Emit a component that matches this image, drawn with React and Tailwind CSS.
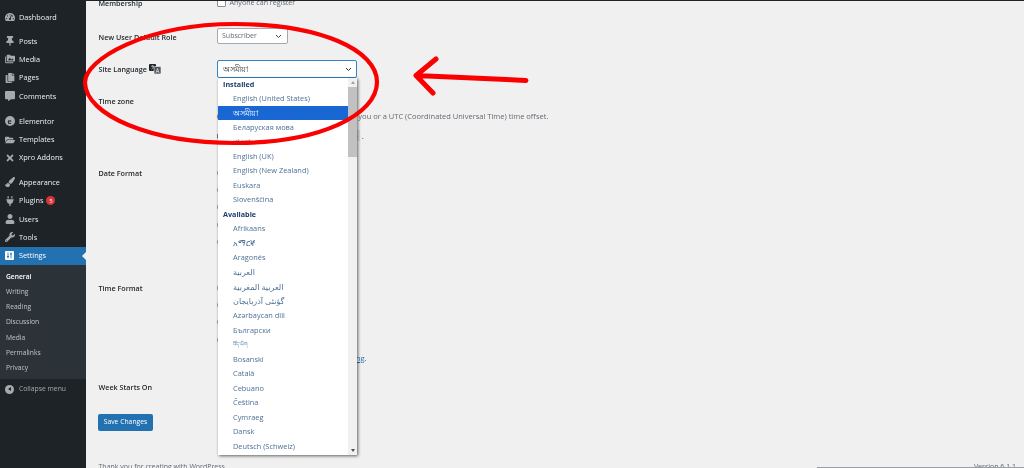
import React from "react";
import { FaThumbtack, FaFolderOpen, FaUser, FaWrench, FaPaintBrush, FaPlug, FaCommentAlt, FaCopy, FaTimes, FaTachometerAlt } from "react-icons/fa";
import { MdPermMedia } from "react-icons/md";

const Item = ({ icon, label, extra }) => (
  <div className="flex items-center h-[18.4px] pl-[3px] text-[#f0f0f1]">
    <span className="w-[13px] flex justify-center text-[#a7aaad] text-[10px] shrink-0">{icon}</span>
    <span className="ml-[3px] text-[7.3px]">{label}</span>
    {extra}
  </div>
);
const Gap = ({ h }) => <div style={{ height: h }} />;
const SubItem = ({ children, active }) => (
  <div className={`h-[15.1px] flex items-center pl-[6px] text-[6.7px] ${active ? "text-white font-semibold" : "text-[#c3c4c7]"}`}>{children}</div>
);

const Row = ({ label, h, children }) => (
  <div className="flex shrink-0" style={{ height: h }}>
    <div className="w-[118px] shrink-0 text-[7.2px] font-semibold text-[#1d2327] flex items-start">{label}</div>
    <div className="flex-1 min-w-0 relative">{children}</div>
  </div>
);
const Radio = ({ label }) => (
  <div className="h-[17.4px] flex items-center gap-[6px] text-[7.5px] text-[#3c434a]">
    <span className="w-[8px] h-[8px] rounded-full border border-[#8c8f94] bg-white shrink-0" />
    {label}
  </div>
);

const azb = "\u06AF\u0624\u0646\u0626\u06CC \u0622\u0630\u0631\u0628\u0627\u06CC\u062C\u0627\u0646";
const installed = ["English (United States)", "অসমীয়া", "Беларуская мова", "বাংলা", "English (UK)", "English (New Zealand)", "Euskara", "Slovenščina"];
const available = ["Afrikaans", "አማርኛ", "Aragonés", "العربية", "العربية المغربية", azb, "Azərbaycan dili", "Български", "བོད་ཡིག", "Bosanski", "Català", "Cebuano", "Čeština", "Cymraeg", "Dansk", "Deutsch (Schweiz)"];
const bigger = ["অসমীয়া", "বাংলা", "አማርኛ", "العربية", "العربية المغربية", azb];

const Opt = ({ t }) => {
  const size = t === "བོད་ཡིག" ? "text-[5px]" : bigger.includes(t) ? "text-[8px]" : "text-[7.4px]";
  const tone = t === "অসমীয়া" ? "bg-[#1967d2] text-white" : "text-[#4f7196]";
  return <div className={`h-[14.5px] flex items-center pl-[15px] ${size} ${tone}`}>{t}</div>;
};

function LangIcon() {
  return (
    <svg width="12" height="10" viewBox="0 0 12 10">
      <rect x="0" y="0" width="7" height="7" rx="1" fill="#1d2327" />
      <rect x="5" y="2.500" width="7" height="7.500" rx="1" fill="#50575e" stroke="#f0f0f1" strokeWidth="0.6" />
      <path d="M2 2.200h3M3.500 1.200v1M2.500 5.200c1 -.5 1.700 -1.700 2 -3" stroke="#fff" strokeWidth=".6" fill="none" />
      <path d="M7 9l1.500 -4.500 1.500 4.500M7.600 7.500h1.800" stroke="#fff" strokeWidth=".6" fill="none" />
    </svg>
  );
}

export default function App() {
  return (
    <div className="relative w-[1024px] h-[468px] overflow-hidden flex bg-[#f0f0f1] blur-[0.4px]" style={{ fontFamily: '"Open Sans", "Noto Sans", "Noto Sans CJK SC", "DejaVu Sans", sans-serif' }}>
      {/* sidebar */}
      <aside className="w-[86px] shrink-0 bg-[#1d2327] pt-[8px] flex flex-col">
        <Item icon={<FaTachometerAlt />} label="Dashboard" />
        <Gap h={5.5} />
        <Item icon={<FaThumbtack />} label="Posts" />
        <Item icon={<MdPermMedia />} label="Media" />
        <Item icon={<FaCopy />} label="Pages" />
        <Item icon={<FaCommentAlt />} label="Comments" />
        <Gap h={6.5} />
        <Item icon={<span className="w-[10px] h-[10px] rounded-full bg-[#a7aaad] flex items-center justify-center text-[7px] text-[#1d2327] font-bold leading-none">e</span>} label="Elementor" />
        <Item icon={<FaFolderOpen />} label="Templates" />
        <Item icon={<FaTimes />} label="Xpro Addons" />
        <Gap h={6} />
        <Item icon={<FaPaintBrush />} label="Appearance" />
        <Item icon={<FaPlug />} label="Plugins" extra={
          <span className="ml-[3px] w-[9px] h-[9px] rounded-full bg-[#d63638] text-white text-[6px] flex items-center justify-center leading-none">5</span>
        } />
        <Item icon={<FaUser />} label="Users" />
        <Item icon={<FaWrench />} label="Tools" />
        <div className="relative bg-[#2271b1] text-white h-[18px] flex items-center pl-[3px]">
          <span className="w-[13px] flex justify-center shrink-0">
            <svg width="9" height="9" viewBox="0 0 9 9">
              <rect width="9" height="9" rx="1" fill="#fff" />
              <path d="M3 1.500v6M6 1.500v6" stroke="#2271b1" strokeWidth=".8" />
              <path d="M2 5.500h2M5 3h2" stroke="#2271b1" strokeWidth="1.200" />
            </svg>
          </span>
          <span className="ml-[3px] text-[7.3px]">Settings</span>
          <span className="absolute right-0 top-[5px] w-0 h-0 border-y-[4px] border-y-transparent border-r-[4px] border-r-[#f0f0f1]" />
        </div>
        <div className="bg-[#2c3338] pt-[5px] pb-[3.5px]">
          <SubItem active>General</SubItem>
          <SubItem>Writing</SubItem>
          <SubItem>Reading</SubItem>
          <SubItem>Discussion</SubItem>
          <SubItem>Media</SubItem>
          <SubItem>Permalinks</SubItem>
          <SubItem>Privacy</SubItem>
        </div>
        <div className="flex items-center h-[19px] mt-[1px] pl-[3px] text-[#a7aaad] text-[6.8px]">
          <span className="w-[13px] flex justify-center shrink-0">
            <span className="w-[9px] h-[9px] rounded-full bg-[#a7aaad] flex items-center justify-center">
              <span className="w-0 h-0 border-y-[2.5px] border-y-transparent border-r-[3px] border-r-[#1d2327]" />
            </span>
          </span>
          <span className="ml-[3px]">Collapse menu</span>
        </div>
      </aside>

      {/* main */}
      <main className="flex-1 min-w-0 pl-[12.5px] -mt-[2px] flex flex-col">
        <Row label="Membership" h={34}>
          <div className="flex items-center gap-[4px] h-[11px] -mt-[1px] text-[7.1px] text-[#646970]">
            <span className="w-[9px] h-[9px] rounded-[1px] border border-[#8c8f94] bg-white" />
            Anyone can register
          </div>
        </Row>
        <Row label="New User Default Role" h={32}>
          <div className="w-[71px] h-[16px] -mt-[4px] border border-[#a7aaad] rounded-[2px] bg-white flex items-center justify-between pl-[4.5px] pr-[5px] text-[7px] text-[#646970]">
            Subscriber
            <svg width="7" height="5" viewBox="0 0 7 5"><path d="M1 1l2.500 2.500L6 1" stroke="#3c434a" strokeWidth="1" fill="none" /></svg>
          </div>
        </Row>
        <Row label={<span className="flex items-center gap-[2px]">Site Language <LangIcon /></span>} h={32}>
          <div className="h-[17px]" />
        </Row>
        <Row label="Time zone" h={72}>
          <div className="pt-[15px] text-[7.5px] text-[#646970] whitespace-nowrap">Choose either a city in the same zone as you or a UTC (Coordinated Universal Time) time offset.</div>
          <div className="pt-[8px] text-[8px] text-[#3c434a] whitespace-nowrap">Universal time is <span className="bg-[#dcdcde] px-[2px]">2023-01-01 00:00:00</span> .</div>
        </Row>
        <Row label="Date Format" h={115}>
          <div className="-mt-[4px]">
            <Radio label="January 1, 2023" /><Radio label="2023-01-01" /><Radio label="01/01/2023" /><Radio label="01/01/2023" /><Radio label="Custom:" />
          </div>
        </Row>
        <Row label="Time Format" h={99}>
          <div className="-mt-[4px]">
            <Radio label="12:00 am" /><Radio label="12:00 AM" /><Radio label="00:00" /><Radio label="Custom:" />
          </div>
          <div className="absolute left-0 top-[70px] text-[7.5px] text-[#3c434a] whitespace-nowrap w-[150px] flex justify-end">
            <span className="text-[#2271b1] underline">Date formatting</span><span>.</span>
          </div>
        </Row>
        <Row label="Week Starts On" h={32}>
          <div />
        </Row>
        <div className="flex shrink-0 -ml-[0.5px]">
          <div className="w-[55px] h-[17px] rounded-[2px] bg-[#2271b1] text-white text-[6.8px] flex items-center justify-center">Save Changes</div>
        </div>
        <div className="mt-[31px] shrink-0 pr-[8px] flex justify-between text-[7px] text-[#646970] whitespace-nowrap">
          <span>Thank you for creating with WordPress.</span>
          <span>Version 6.1.1</span>
        </div>
      </main>

      {/* top strip & bottom rule */}
      <div className="absolute left-[86px] right-0 top-0 h-px bg-[#1d2327]" />
      <div className="absolute left-[817px] right-0 bottom-0 h-px bg-[#9a9da1]" />

      {/* open select */}
      <div className="absolute left-[217px] top-[60px] w-[140px] h-[18px] bg-white border border-[#3582c4] rounded-[2px] flex items-center justify-between pl-[5px] pr-[4px] text-[8px] text-[#2c3338]">
        অসমীয়া
        <svg width="7" height="5" viewBox="0 0 7 5"><path d="M1 1l2.500 2.500L6 1" stroke="#2c3338" strokeWidth="1" fill="none" /></svg>
      </div>
      <div className="absolute left-[218px] top-[78px] w-[139px] h-[377px] bg-white shadow-[1px_1px_3px_rgba(0,0,0,0.6)] flex overflow-hidden">
        <div className="flex-1 min-w-0 overflow-hidden">
          <div className="h-[13px] flex items-center pl-[5px] text-[7.2px] font-bold text-[#1f3a6e]">Installed</div>
          {installed.map((t) => <Opt key={t} t={t} />)}
          <div className="h-[14.5px] flex items-center pl-[5px] text-[7.2px] font-bold text-[#1f3a6e]">Available</div>
          {available.map((t) => <Opt key={t} t={t} />)}
        </div>
        <div className="w-[9px] bg-[#f1f1f1] relative">
          <div className="absolute top-[9px] left-0 right-0 h-[70px] bg-[#c1c1c1]" />
          <span className="absolute top-[3px] left-[2.5px] w-0 h-0 border-x-[2px] border-x-transparent border-b-[3px] border-b-[#a3a3a3]" />
          <span className="absolute bottom-[3px] left-[2.5px] w-0 h-0 border-x-[2px] border-x-transparent border-t-[3px] border-t-[#505050]" />
        </div>
      </div>

      {/* red annotation */}
      <svg className="absolute inset-0 pointer-events-none" width="1024" height="468" viewBox="0 0 1024 468">
        <path d="M85 83 C84 60 145 24 235 24 C320 24 377 50 377 82 C377 115 320 143 235 143 C150 143 86 115 85 83 Z" fill="none" stroke="#fb0000" strokeWidth="4.200" />
        <path d="M526 80.500 L416 75.500 M436 59 L416 75.500 L433 93" fill="none" stroke="#fb0000" strokeWidth="5" strokeLinecap="round" strokeLinejoin="round" />
      </svg>
    </div>
  );
}
